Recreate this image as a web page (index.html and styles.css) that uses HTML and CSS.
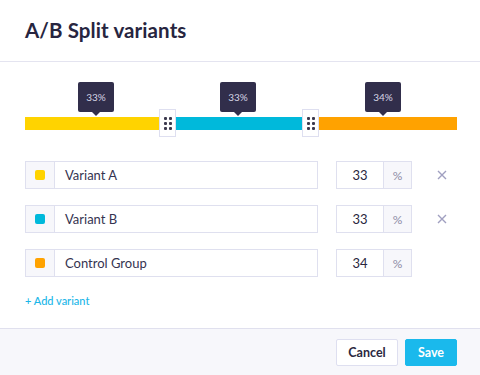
FILE: index.html
```html
<!DOCTYPE html>
<html>
<head>
<meta charset="utf-8">
<link rel="stylesheet" href="styles.css">
</head>
<body>
<div class="modal">
  <header class="header"><h1 class="title">A/B Split variants</h1></header>
  <section class="content">
    <div class="slider">
      <div class="tip" style="left:53px">33%</div>
      <div class="tip" style="left:195px">33%</div>
      <div class="tip" style="left:340px">34%</div>
      <div class="bar">
        <div class="seg yellow" style="width:134px"></div>
        <div class="handle"><span class="dots"><i></i><i></i><i></i><i></i><i></i><i></i></span></div>
        <div class="seg cyan" style="width:126px"></div>
        <div class="handle"><span class="dots"><i></i><i></i><i></i><i></i><i></i><i></i></span></div>
        <div class="seg orange grow"></div>
      </div>
    </div>
    <div class="rows">
      <div class="row">
        <div class="swatch-box"><span class="swatch yellow"></span></div>
        <div class="name">Variant A</div>
        <div class="num"><span class="val">33</span><span class="pct">%</span></div>
        <span class="remove"><svg width="10" height="10" viewBox="0 0 10 10"><path d="M1 1L9 9M9 1L1 9" stroke="#a09fc0" stroke-width="1.4" fill="none"/></svg></span>
      </div>
      <div class="row">
        <div class="swatch-box"><span class="swatch cyan"></span></div>
        <div class="name">Variant B</div>
        <div class="num"><span class="val">33</span><span class="pct">%</span></div>
        <span class="remove"><svg width="10" height="10" viewBox="0 0 10 10"><path d="M1 1L9 9M9 1L1 9" stroke="#a09fc0" stroke-width="1.4" fill="none"/></svg></span>
      </div>
      <div class="row">
        <div class="swatch-box"><span class="swatch orange"></span></div>
        <div class="name">Control Group</div>
        <div class="num"><span class="val">34</span><span class="pct">%</span></div>
        <span class="remove empty"></span>
      </div>
    </div>
    <a class="add">+ Add variant</a>
  </section>
  <footer class="footer">
    <button class="btn cancel">Cancel</button>
    <button class="btn save">Save</button>
  </footer>
</div>
</body>
</html>
```

FILE: styles.css
```css
* { box-sizing: border-box; }
html, body { margin: 0; padding: 0; background: #fff; }
body { font-family: Lato, "Open Sans", sans-serif; color: #2a2740; width: 480px; height: 375px; overflow: hidden; }
.modal { display: flex; flex-direction: column; height: 375px; }
.header { height: 62px; border-bottom: 1px solid #e4e4f0; padding: 0 25px; display: flex; align-items: center; }
.title { margin: 0; font-size: 20.5px; font-weight: 700; color: #272540; letter-spacing: 0.1px; padding-bottom: 2px; }
.content { flex: 1; padding: 0 23px 0 25px; }
.slider { position: relative; height: 99px; padding-top: 47px; }
.tip { position: absolute; top: 20px; width: 36px; height: 30px; background: #312e4b; color: #d6d5e6; font-size: 10px; border-radius: 2px; display: flex; align-items: center; justify-content: center; }
.tip::after { content: ""; position: absolute; left: 50%; bottom: -4px; margin-left: -4px; border-left: 4px solid transparent; border-right: 4px solid transparent; border-top: 4px solid #312e4b; }
.bar { display: flex; align-items: center; width: 432px; height: 28px; }
.seg { height: 13px; }
.grow { flex: 1; }
.yellow { background: #ffd300; }
.cyan { background: #00b9db; }
.orange { background: #ffa200; }
.handle { width: 17px; height: 28px; background: #fff; border: 1px solid #dedff0; display: flex; align-items: center; justify-content: center; }
.dots { display: grid; grid-template-columns: 3px 3px; grid-auto-rows: 3px; gap: 2px; }
.dots i { display: block; width: 3px; height: 3px; background: #3c3a4e; border-radius: 1px; }
.rows { display: flex; flex-direction: column; gap: 16px; }
.row { display: flex; align-items: center; height: 28px; }
.swatch-box { width: 29px; height: 28px; background: #f7f7fb; border: 1px solid #dfe0ef; border-right: none; display: flex; align-items: center; justify-content: center; }
.swatch { width: 10px; height: 10px; border-radius: 2px; }
.name { width: 264px; height: 28px; border: 1px solid #dfe0ef; padding-left: 10px; font-size: 13px; color: #353350; display: flex; align-items: center; }
.num { margin-left: 18px; width: 76px; height: 28px; border: 1px solid #dfe0ef; display: flex; font-size: 13px; }
.val { width: 47px; display: flex; align-items: center; justify-content: center; color: #2a2740; border-right: 1px solid #dfe0ef; }
.pct { flex: 1; background: #f7f7fb; color: #8e8ca6; display: flex; align-items: center; justify-content: center; font-size: 12px; }
.remove { margin-left: 25px; width: 10px; height: 10px; display: flex; }
.add { display: block; margin-top: 17px; font-size: 11px; font-weight: 500; color: #1ab6e8; }
.footer { height: 47px; border-top: 1px solid #e0e0ee; background: #f7f7fb; display: flex; justify-content: flex-end; align-items: center; gap: 7px; padding: 0 23px 0 0; }
.btn { font-family: Lato, sans-serif; font-size: 12.5px; font-weight: 700; height: 27px; border-radius: 2px; cursor: pointer; padding: 0; }
.cancel { width: 62px; background: #fff; border: 1px solid #dedff0; color: #2a2740; }
.save { width: 52px; background: #1ab9ec; border: 1px solid #1ab9ec; color: #fff; }
```
